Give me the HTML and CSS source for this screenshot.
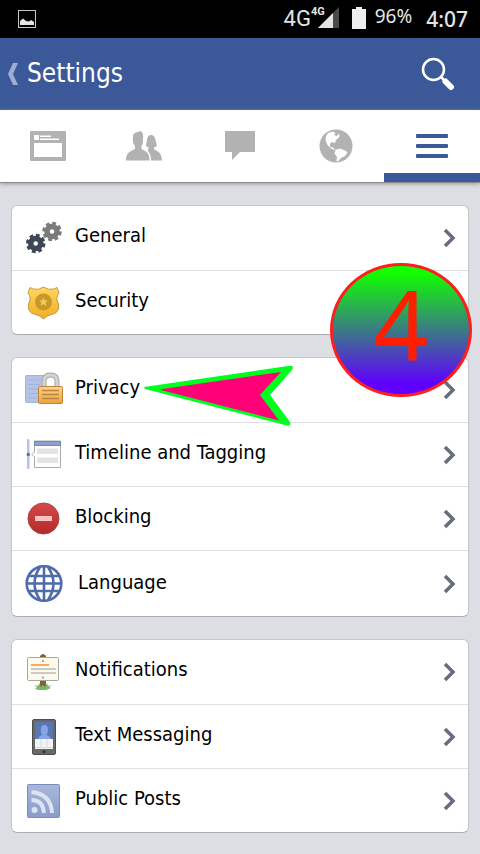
FILE: index.html
```html
<!DOCTYPE html>
<html lang="en">
<head>
    <meta charset="UTF-8">
    <meta name="viewport" content="width=device-width, initial-scale=1.0">
    <title>Settings</title>
    <link rel="stylesheet" href="styles.css">
</head>
<body>

    <!-- phone status bar -->
    <div class="status">
        <svg class="shot" width="20" height="20" viewBox="0 0 20 20">
            <rect x="1.5" y="1.5" width="17" height="17" fill="none" stroke="#c8c8c8"/>
            <path d="M3 16V12L6 9.500L9 12L12 12.500L14 11L17 13V16Z" fill="#e4e4e4"/>
        </svg>
        <span class="net">4G</span>
        <span class="net-small">4G</span>
        <svg class="signal" width="21" height="21" viewBox="0 0 21 21">
            <path d="M0 21L21 0V21Z" fill="#4a4a4a"/>
            <path d="M0 21L15 6V21Z" fill="#e4e4e4"/>
        </svg>
        <svg class="battery" width="14" height="22" viewBox="0 0 14 22">
            <path d="M0 2H4V0H10V2H14V22H0Z" fill="#eee"/>
        </svg>
        <span class="percent">96%</span>
        <span class="clock">4:07</span>
    </div>

    <header class="header">
        <button class="back" type="button" aria-label="Back">
            <svg width="10" height="22" viewBox="0 0 10 22"><path d="M5 0H10L5 11L10 22H5L0 11Z" fill="#9dadd3"/></svg>
        </button>
        <h1>Settings</h1>
        <button class="search" type="button" aria-label="Search">
            <svg width="34" height="34" viewBox="0 0 34 34">
                <circle cx="12.500" cy="12.500" r="10.500" fill="none" stroke="#fff" stroke-width="2.500"/>
                <path d="M19.500 19.500L23 23" stroke="#fff" stroke-width="2.500"/>
                <path d="M24.500 24.500L30 30" stroke="#fff" stroke-width="6" stroke-linecap="round"/>
            </svg>
        </button>
    </header>

    <nav class="tabs">
        <a href="#" aria-label="News Feed">
            <svg width="36" height="36" viewBox="0 0 36 36">
                <rect y="3" width="36" height="30" rx="1" fill="#b2b2b2"/>
                <path d="M4 7H9V12H4ZM10 7.500H21V9H10ZM10 10.500H29V12H10ZM4 15H32V29H4Z" fill="#fff"/>
            </svg>
        </a>
        <a href="#" aria-label="Friends">
            <svg width="36" height="36" viewBox="0 0 36 36" fill="#b2b2b2">
                <path d="M20 18C21 15 20 7 25 7C30 7 29.500 14 31 18L28 19.500V21.500C33 23.500 35.500 25 36 32.500H25C25 27 23.500 24.500 21.500 22.500C22.500 22 22.500 20.500 22.500 19.500Z"/>
                <path d="M0 32.500C0 25 3 24 9 21V18C7 16 6.500 12 7 8C7.500 5 10 4 12 4L14 3C17 4 17.500 7 17 11C17.500 15 16 17 15.500 18V21C21 24 23.500 25 23.500 32.500Z"/>
            </svg>
        </a>
        <a href="#" aria-label="Messages">
            <svg width="36" height="36" viewBox="0 0 36 36"><path d="M3 3H33V24H18L10 32V24H3Z" fill="#b2b2b2"/></svg>
        </a>
        <a href="#" aria-label="Notifications">
            <svg width="36" height="36" viewBox="0 0 36 36">
                <circle cx="18" cy="18" r="16.500" fill="#b2b2b2"/>
                <path d="M8 8L10 5L15 3.500L17.500 5L16 7L19 8L21 5L21.500 9L18 12L17 15L14 14L12 16V19L15 19.500L17 22L22 20.500L28 23L29.500 24.500L27 28L23 30L20 33.500L18.500 33L19 29L16.500 25.500L17.500 22.500L13 20.500L9.500 17L7.500 12Z" fill="#fff"/>
            </svg>
        </a>
        <a href="#" class="active" aria-label="More">
            <svg width="36" height="36" viewBox="0 0 36 36" fill="#3b5998">
                <rect x="2" y="6" width="32" height="4" rx="1"/>
                <rect x="2" y="16" width="32" height="4" rx="1"/>
                <rect x="2" y="26" width="32" height="4" rx="1"/>
            </svg>
        </a>
    </nav>

    <main class="page">

        <section class="group">
            <a class="row" href="#">
                <svg class="icon" width="38" height="38" viewBox="0 0 38 38">
                    <g fill="none" stroke="#7b7b7b">
                        <circle cx="27" cy="12.500" r="5" stroke-width="5.500"/>
                        <circle cx="27" cy="12.500" r="8" stroke-width="3.500" stroke-dasharray="3.600 2.683"/>
                    </g>
                    <g fill="none" stroke="#3f4656">
                        <circle cx="10.700" cy="24.500" r="5" stroke-width="5.500"/>
                        <circle cx="10.700" cy="24.500" r="8" stroke-width="3.500" stroke-dasharray="3.600 2.683"/>
                    </g>
                </svg>
                <span class="name">General</span>
                <svg class="chevron" width="14" height="20" viewBox="0 0 14 20"><path d="M2 2L10 10L2 18"/></svg>
            </a>
            <a class="row" href="#">
                <svg class="icon" width="38" height="38" viewBox="0 0 38 38">
                    <defs>
                        <linearGradient id="gold" x2="0" y2="1"><stop stop-color="#ffd75e"/><stop offset="1" stop-color="#efad24"/></linearGradient>
                    </defs>
                    <path d="M5 3.500L8 5Q14 6.500 18.500 3Q23 6.500 29 5L32 3.500L34 9Q30 14 33.500 20Q35 29 26.500 30.500Q21.500 31.500 18.500 35Q15.500 31.500 10.500 30.500Q2 29 3.500 20Q7 14 3 9Z" fill="url(#gold)" stroke="#c29a4a"/>
                    <circle cx="18.500" cy="18" r="8.500" fill="#c7992c"/>
                    <path d="M18.500 13.500L19.800 16.500H23L20.400 18.700L21.400 22L18.500 20L15.600 22L16.600 18.700L14 16.500H17.200Z" fill="#f6cb5b"/>
                </svg>
                <span class="name">Security</span>
                <svg class="chevron" width="14" height="20" viewBox="0 0 14 20"><path d="M2 2L10 10L2 18"/></svg>
            </a>
        </section>

        <section class="group">
            <a class="row" href="#">
                <svg class="icon" width="38" height="38" viewBox="0 0 38 38">
                    <defs>
                        <linearGradient id="lock" x2="0" y2="1"><stop stop-color="#ffd38a"/><stop offset="1" stop-color="#eda13c"/></linearGradient>
                    </defs>
                    <rect x=".5" y="4.500" width="20" height="27" rx="1" fill="#b4c3e6" stroke="#a2b3da"/>
                    <path d="M3 9H17M3 13.500H15M3 18H13M3 22.500H13M3 27H13" stroke="#9fb2dc"/>
                    <path d="M19 16V10Q19 4 25.500 4Q32 4 32 10V16" fill="none" stroke="#a6a6a6" stroke-width="5"/>
                    <path d="M19 16V10Q19 4 25.500 4Q32 4 32 10V16" fill="none" stroke="#d3d3d3" stroke-width="3"/>
                    <rect x="13.500" y="15.500" width="24" height="17" rx="1" fill="url(#lock)" stroke="#bd8336"/>
                    <path d="M17 19.500H34M17 23.500H34M17 27.500H34" stroke="#b98543" stroke-width="1.300"/>
                </svg>
                <span class="name">Privacy</span>
                <svg class="pointer" width="152" height="62" viewBox="0 0 152 62">
                    <path d="M1 21L145 0Q152 -1 149 4L127 29L147 56Q149 61 142 59L2 23Z" fill="#00ff1e"/>
                    <path d="M16 23.500L138 6L117 29L136 54.500Z" fill="#ff0078"/>
                </svg>
                <svg class="chevron" width="14" height="20" viewBox="0 0 14 20"><path d="M2 2L10 10L2 18"/></svg>
            </a>
            <a class="row" href="#">
                <svg class="icon" width="38" height="38" viewBox="0 0 38 38">
                    <rect x="2" y="3" width="2.500" height="30" rx="1" fill="#b7c4e2"/>
                    <circle cx="3.300" cy="18.500" r="1.700" fill="#5272b3"/>
                    <path d="M9.500 5V16L7 18.500L9.500 21V31.500H35.500V5Z" fill="#fff" stroke="#aaa"/>
                    <path d="M12 12.500H33V18H12ZM12 21.500H33V27H12Z" fill="#e4e4e4"/>
                    <rect x="9.500" y="5.500" width="26" height="4" fill="#8ba0d0" stroke="#6f87be"/>
                </svg>
                <span class="name">Timeline and Tagging</span>
                <svg class="chevron" width="14" height="20" viewBox="0 0 14 20"><path d="M2 2L10 10L2 18"/></svg>
            </a>
            <a class="row" href="#">
                <svg class="icon" width="38" height="38" viewBox="0 0 38 38">
                    <defs>
                        <linearGradient id="red" x2="0" y2="1"><stop stop-color="#d64949"/><stop offset="1" stop-color="#b22a2a"/></linearGradient>
                    </defs>
                    <circle cx="18.500" cy="18.500" r="15.500" fill="url(#red)" stroke="#a44"/>
                    <rect x="10" y="16" width="17" height="5" fill="#f9c1c4"/>
                </svg>
                <span class="name">Blocking</span>
                <svg class="chevron" width="14" height="20" viewBox="0 0 14 20"><path d="M2 2L10 10L2 18"/></svg>
            </a>
            <a class="row language" href="#">
                <svg class="icon" width="38" height="38" viewBox="0 0 38 38" fill="none" stroke="#4e6cab" stroke-width="2.600">
                    <circle cx="19" cy="18.500" r="17.300"/>
                    <path d="M19 2V36M1 18.500H37M4 11H34M4 26H34"/>
                    <path d="M15 2Q4 18.500 15 35M23 2Q34 18.500 23 35"/>
                </svg>
                <span class="name">Language</span>
                <svg class="chevron" width="14" height="20" viewBox="0 0 14 20"><path d="M2 2L10 10L2 18"/></svg>
            </a>
            <div class="step">4</div>
        </section>

        <section class="group">
            <a class="row" href="#">
                <svg class="icon" width="38" height="38" viewBox="0 0 38 38">
                    <path d="M15 36V3Q18 -1 21 3V36Z" fill="#87602f"/>
                    <path d="M10 36L12 34L9 32L13 33L14 30L16 34L18 32L20 34L22 30L23 33L27 32L24 34L26 35L21 37H14Z" fill="#77b869"/>
                    <rect x="2.500" y="4.500" width="31" height="23" rx="1" fill="#fcf9ed" stroke="#aaa79d"/>
                    <path d="M6 12H24" stroke="#f6aa62" stroke-width="2"/>
                    <path d="M6 16H31M6 20H31" stroke="#bbb" stroke-width="1.700"/>
                    <path d="M17 8H19M17 24.500H19" stroke="#aaa" stroke-width="2"/>
                </svg>
                <span class="name">Notifications</span>
                <svg class="chevron" width="14" height="20" viewBox="0 0 14 20"><path d="M2 2L10 10L2 18"/></svg>
            </a>
            <a class="row" href="#">
                <svg class="icon" width="38" height="38" viewBox="0 0 38 38">
                    <rect x="7.500" y="1.500" width="23" height="35" rx="1.500" fill="#686868" stroke="#505050"/>
                    <rect x="10" y="4" width="18" height="27" fill="#5976b5"/>
                    <path d="M13 21Q14 18 17 17Q15 14 16 10Q17 7 19.500 7Q22.500 7 23 11Q23 15 21.500 17Q25 18 26 21Z" fill="#87a4e8"/>
                    <rect x="10" y="21" width="18" height="10" fill="#f2f3f5"/>
                    <path d="M16 21V30M22 21V30M10 29.500H28" stroke="#d8dadd"/>
                    <circle cx="19" cy="33.700" r="1.500" fill="#333"/>
                </svg>
                <span class="name">Text Messaging</span>
                <svg class="chevron" width="14" height="20" viewBox="0 0 14 20"><path d="M2 2L10 10L2 18"/></svg>
            </a>
            <a class="row" href="#">
                <svg class="icon" width="38" height="38" viewBox="0 0 38 38">
                    <defs>
                        <linearGradient id="blue" x2="0" y2="1"><stop stop-color="#a9b8dc"/><stop offset="1" stop-color="#879dcb"/></linearGradient>
                    </defs>
                    <rect x="2.500" y="2.500" width="32" height="33" rx="1" fill="url(#blue)" stroke="#768dbf"/>
                    <circle cx="9.500" cy="28" r="3" fill="#dde3f1"/>
                    <path d="M6.500 18Q18 18 19 31M6.500 10Q26 12 27 31" fill="none" stroke="#dde3f1" stroke-width="4"/>
                </svg>
                <span class="name">Public Posts</span>
                <svg class="chevron" width="14" height="20" viewBox="0 0 14 20"><path d="M2 2L10 10L2 18"/></svg>
            </a>
        </section>

    </main>

</body>
</html>
```
FILE: styles.css
```css
*{
    box-sizing: border-box;
}
body{
    margin: 0;
    background-color: #dddee3;
    font-family: "DejaVu Sans Condensed", "Noto Sans", sans-serif;
    color: #000;
}
svg{
    display: block;
    flex-shrink: 0;
}
.status{
    display: flex;
    align-items: center;
    height: 38px;
    padding: 0 12px 0 17px;
    background-color: #000;
    color: #e4e4e4;
    font-family: "Noto Sans", sans-serif;
}
.net{
    margin-left: auto;
    font-family: Roboto, "Noto Sans", sans-serif;
    font-size: 22px;
    line-height: 38px;
}
.net-small{
    align-self: flex-start;
    padding-top: 6px;
    font-family: Roboto, "Noto Sans", sans-serif;
    font-size: 11px;
    font-weight: bold;
    line-height: 12px;
}
.signal{
    margin: 0 13px 4px -7px;
}
.battery{
    margin: 0 9px 2px 0;
}
.percent{
    margin-right: 14px;
    padding-bottom: 6px;
    font-size: 19px;
    line-height: 24px;
}
.clock{
    font-size: 21px;
    font-weight: 500;
    line-height: 38px;
}
.header{
    display: flex;
    align-items: center;
    height: 72px;
    padding: 0 25px 0 8px;
    background-color: #3b5998;
    color: #fff;
}
.header h1{
    flex: 1;
    margin: 0;
    padding: 0 0 2px 9px;
    font-size: 26px;
    font-weight: normal;
    line-height: 32px;
}
.header button{
    padding: 0;
    border: none;
    background: none;
    cursor: pointer;
}
.tabs{
    display: grid;
    grid-template-columns: repeat(5, 1fr);
    height: 73px;
    background-color: #fff;
    border-bottom: 1px solid #88898d;
    box-shadow: 0 1px 4px #999;
}
.tabs a{
    display: flex;
    justify-content: center;
    align-items: center;
}
.tabs .active{
    border-top: 9px solid #fff;
    border-bottom: 9px solid #3b5998;
}
.page{
    display: flex;
    flex-direction: column;
    gap: 22px;
    padding: 22px 11px 20px;
}
.group{
    position: relative;
    background-color: #fff;
    border: 1px solid #c4c5ca;
    border-bottom-color: #acadb2;
    border-radius: 6px;
}
.row{
    display: flex;
    align-items: center;
    height: 64px;
    padding: 0 11px 0 13px;
    color: #000;
    text-decoration: none;
}
.row + .row{
    border-top: 1px solid #dfdfdf;
}
.name{
    flex: 1;
    padding: 0 0 6px 12px;
    font-size: 20px;
    line-height: 26px;
}
.row.language{
    height: 66px;
}
.language .name{
    padding: 0 0 4px 15px;
}
.chevron{
    fill: none;
    stroke: #656d7e;
    stroke-width: 3.500;
}
/* pink arrow over the Privacy row */
.pointer{
    position: absolute;
    top: 8px;
    left: 131px;
}
/* step number, hangs over the top right corner of the group */
.step{
    position: absolute;
    top: -95px;
    right: -4px;
    width: 142px;
    height: 134px;
    border: 3px solid #ff1e1e;
    border-radius: 50%;
    background-image: linear-gradient(#11ff00 5%, #6000ff 92%);
    color: #ff1e00;
    font-family: "Noto Sans", sans-serif;
    font-size: 96px;
    line-height: 116px;
    text-align: center;
}
```
